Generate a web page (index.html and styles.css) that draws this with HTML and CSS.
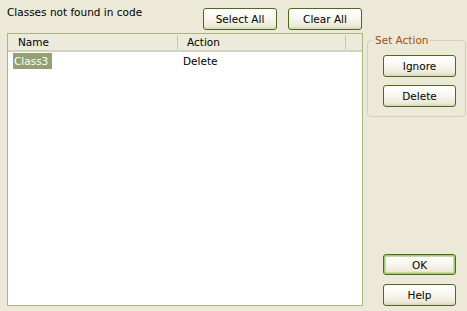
FILE: index.html
```html
<!DOCTYPE html>
<html>
<head>
<meta charset="utf-8">
<link rel="stylesheet" href="styles.css">
</head>
<body>
<div class="dialog">
  <div class="left">
    <div class="topbar">
      <span class="caption">Classes not found in code</span>
      <button class="btn btn-select">Select All</button>
      <button class="btn btn-clear">Clear All</button>
    </div>
    <div class="list">
      <div class="header">
        <div class="col col-name">Name</div>
        <div class="col col-action">Action</div>
        <div class="col col-rest"></div>
      </div>
      <div class="row">
        <div class="cell cell-name"><span class="sel">Class3</span></div>
        <div class="cell cell-action">Delete</div>
      </div>
    </div>
  </div>
  <div class="right">
    <fieldset class="group">
      <legend class="group-title">Set Action</legend>
      <button class="btn">Ignore</button>
      <button class="btn">Delete</button>
    </fieldset>
    <div class="bottom">
      <button class="btn btn-default">OK</button>
      <button class="btn">Help</button>
    </div>
  </div>
</div>
</body>
</html>
```

FILE: styles.css
```css
html, body {
  margin: 0;
  padding: 0;
  background: #ECE9D8;
}
body {
  width: 467px;
  height: 311px;
  overflow: hidden;
  font-family: "DejaVu Sans", sans-serif;
  font-size: 10.5px;
  color: #000;
}
.dialog {
  display: flex;
  height: 311px;
}
.left {
  width: 356px;
  margin-left: 7px;
  display: flex;
  flex-direction: column;
}
.topbar {
  height: 22px;
  margin-top: 8px;
  display: flex;
  align-items: flex-start;
}
.caption {
  flex: 1;
  margin-top: -2px;
}
.btn {
  width: 74px;
  height: 22px;
  font-family: inherit;
  font-size: inherit;
  color: #000;
  border: 1px solid #4B6A1B;
  border-radius: 3px;
  background: linear-gradient(#FFFFFF 0%, #F8F7F0 45%, #EDEAD8 85%, #D8D3BC 100%);
  padding: 0;
  box-sizing: border-box;
}
.btn-select {
  margin-right: 11px;
}
.btn-clear {
  width: 74px;
  margin-right: 1px;
}
.list {
  margin-top: 3px;
  height: 273px;
  box-sizing: border-box;
  border: 1px solid #A5B97F;
  background: #fff;
}
.header {
  display: flex;
  height: 16px;
  background: #EBEADB;
  border-bottom: 2px solid #D6D2C2;
  box-sizing: content-box;
}
.col {
  box-sizing: border-box;
}
.col-name {
  width: 170px;
  padding-left: 10px;
  border-right: 1px solid #C7C5B2;
}
.col-action {
  width: 168px;
  padding-left: 9px;
  border-right: 1px solid #C7C5B2;
}
.col-rest {
  flex: 1;
}
.header .col-name, .header .col-action {
  height: 14px;
  margin-top: 1px;
  line-height: 14px;
}
.row {
  display: flex;
  height: 16px;
  margin-top: 1px;
}
.cell {
  box-sizing: border-box;
}
.cell-name {
  width: 170px;
  padding-left: 5px;
}
.sel {
  display: inline-block;
  background: #93A070;
  color: #fff;
  height: 16px;
  line-height: 16px;
  padding: 0 2px 0 1px;
  width: 36px;
}
.cell-action {
  padding-left: 5px;
  line-height: 16px;
}
.right {
  margin-left: 4px;
  flex: 1;
  display: flex;
  flex-direction: column;
}
.group {
  margin: 34px 1px 0 0;
  padding: 9px 0 0 5px;
  height: 83px;
  box-sizing: border-box;
  border: 1px solid #D0D0BF;
  border-radius: 4px;
  display: flex;
  flex-direction: column;
  gap: 8px;
}
.group-title {
  color: #A24D16;
  padding: 0 2px;
  margin: 0;
  line-height: 12px;
}
.group .btn {
  width: 73px;
  margin-left: 10px;
}
.bottom {
  margin-top: auto;
  margin-bottom: 5px;
  padding-left: 16px;
  display: flex;
  flex-direction: column;
  gap: 9px;
}
.bottom .btn {
  width: 73px;
}
.btn-default {
  box-shadow: inset 0 0 0 1px #A9C97A, inset 0 0 0 2px #C4DB9C;
  height: 21px;
}
```
